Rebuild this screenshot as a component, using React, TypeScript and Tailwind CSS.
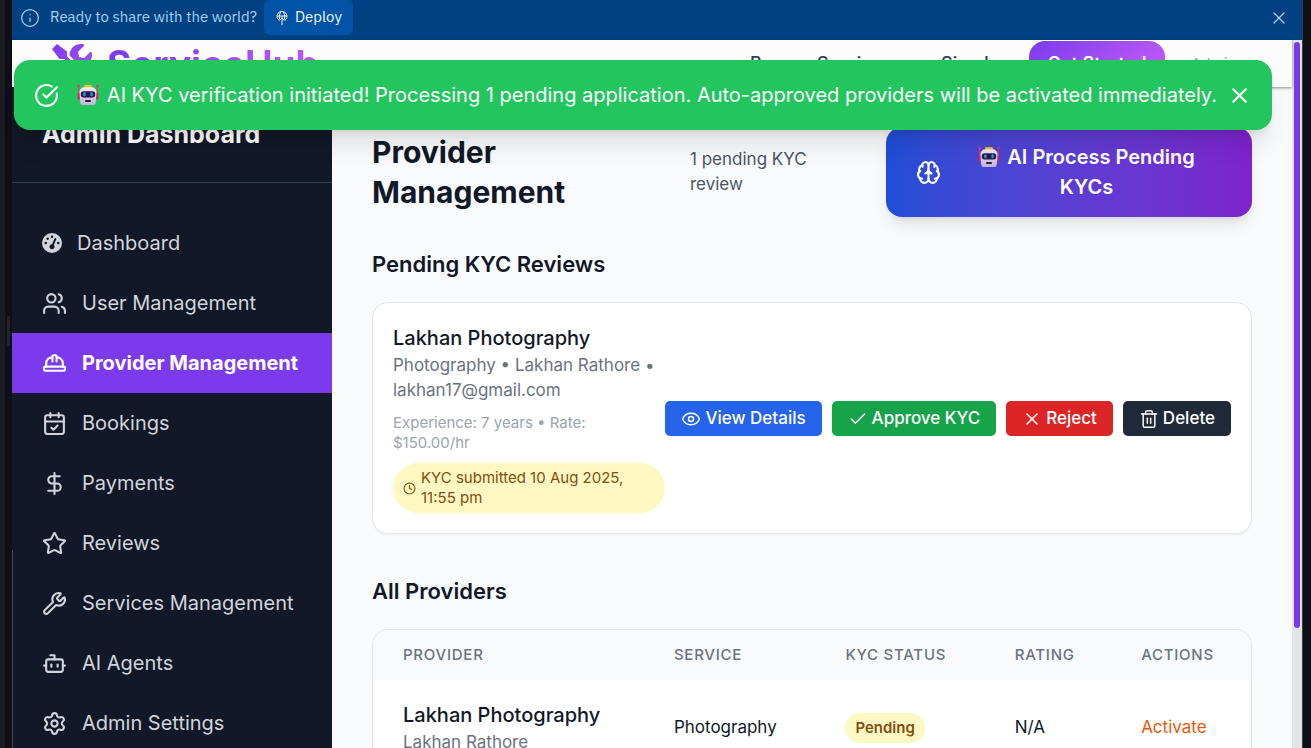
import React from "react";
import {
  Bot, Brain, CalendarCheck, Check, CircleCheckBig, Clock, DollarSign, Eye, HardHat,
  Info, Settings, Star, Trash2, Users, Wrench, X,
} from "lucide-react";
import { FaTools } from "react-icons/fa";
import { FaGaugeHigh } from "react-icons/fa6";

function Robot() {
  return (
    <svg viewBox="0 0 22 22" className="mr-0.5 inline-block size-[22px] shrink-0 align-[-4px]" role="img" aria-label="robot">
      <defs>
        <linearGradient id="robot-head" x1="0" x2="0" y1="0" y2="1">
          <stop stopColor="#f3ecf6" />
          <stop offset="1" stopColor="#c3b3dc" />
        </linearGradient>
      </defs>
      <circle cx="1.6" cy="2" r="1.2" fill="#f92f60" />
      <circle cx="20.4" cy="2" r="1.2" fill="#f92f60" />
      <rect x="1.1" y="2" width="1" height="10" fill="#f92f60" />
      <rect x="19.9" y="2" width="1" height="10" fill="#f92f60" />
      <rect x="0.8" y="9" width="3" height="6.500" rx="1" fill="#e0245e" />
      <rect x="18.200" y="9" width="3" height="6.500" rx="1" fill="#e0245e" />
      <rect x="7" y="1" width="8" height="4" rx="1.4" fill="#fcb621" />
      <path d="M7.500 3.200h7a5 5 0 0 1 5 5l-.7 10.300a2.600 2.600 0 0 1-2.600 2.500H5.800a2.600 2.600 0 0 1-2.600-2.500L2.500 8.200a5 5 0 0 1 5-5Z" fill="url(#robot-head)" />
      <rect x="3.800" y="7.200" width="14.400" height="6.200" rx="2.600" fill="#2b1a45" />
      <rect x="6.200" y="8.300" width="2.400" height="4" rx="1.200" fill="#1f9fe8" />
      <rect x="13.400" y="8.300" width="2.400" height="4" rx="1.200" fill="#1f9fe8" />
      <rect x="8.200" y="16" width="5.600" height="2" rx=".5" fill="#321b41" />
    </svg>
  );
}

const nav = [
  { label: "User Management", Icon: Users },
  { label: "Provider Management", Icon: HardHat, active: true },
  { label: "Bookings", Icon: CalendarCheck },
  { label: "Payments", Icon: DollarSign },
  { label: "Reviews", Icon: Star },
  { label: "Services Management", Icon: Wrench },
  { label: "AI Agents", Icon: Bot },
  { label: "Admin Settings", Icon: Settings },
];

const actions = [
  { label: "View Details", Icon: Eye, color: "bg-[#2563eb]" },
  { label: "Approve KYC", Icon: Check, color: "bg-[#16a34a]" },
  { label: "Reject", Icon: X, color: "bg-[#dc2626]" },
  { label: "Delete", Icon: Trash2, color: "bg-[#1f2937]" },
];

function DeployBanner() {
  return (
    <div className="flex h-10 shrink-0 items-start bg-[#004182] pr-[13px] pl-2 font-['IBM_Plex_Sans','Noto_Sans',sans-serif] text-[15px] text-[#a8d1fa]">
      <div className="flex h-[35px] items-center">
        <Info className="mr-2.5 size-5" strokeWidth={1.5} />
        <span>Ready to share with the world?</span>
        <button className="ml-[7px] flex h-[35px] items-center gap-1.5 rounded-md bg-[#0053a6] px-[11px] text-[#f5f9fc]">
          <svg viewBox="0 0 14 16" className="h-4 w-3.5" fill="none" stroke="currentColor" strokeWidth="1">
            <path d="M4.500 10.700A5 5 0 1 1 9.500 10.700M2 6h10M7 15V6M4.800 10.200 7 8l2.200 2.200M4.700 9.500C3.500 5.500 5 2 7 1.200 9 2 10.500 5.500 9.300 9.500" />
          </svg>
          Deploy
        </button>
      </div>
      <button aria-label="Dismiss" className="ml-auto flex h-[35px] items-center">
        <X className="size-5" strokeWidth={1.5} />
      </button>
    </div>
  );
}

function SiteHeader() {
  return (
    <header className="relative flex h-[47px] shrink-0 items-center justify-between bg-[#fcfcfc] px-10 shadow-[0_1px_3px_rgba(0,0,0,0.45)]">
      <a href="#" className="flex items-center gap-[15px] text-[37px] leading-[46px] font-bold">
        <svg width="0" height="0" className="absolute">
          <linearGradient id="brand" x1="0" x2="1" y1="0" y2="1">
            <stop stopColor="#7c3aed" />
            <stop offset="1" stopColor="#a855f7" />
          </linearGradient>
        </svg>
        <FaTools className="size-10" fill="url(#brand)" />
        <span className="bg-linear-to-r from-[#7c3aed] to-[#c056f5] bg-clip-text text-transparent">ServiceHub</span>
      </a>
      <nav className="flex shrink-0 items-center text-lg font-medium text-[#374151]">
        <a href="#" className="w-[67px]">Browse</a>
        <a href="#" className="w-[124px]">Services</a>
        <a href="#" className="w-[88px]">Sign In</a>
        <a href="#" className="flex h-[45px] w-[136px] items-center justify-center rounded-2xl bg-linear-135 from-[#7c3aed] to-[#c85cf8] font-semibold text-white">Get Started</a>
        <a href="#" className="w-[87px] pl-[26px] text-[15px] font-normal text-[#9ca3af]">Admin</a>
      </nav>
    </header>
  );
}

function Sidebar() {
  return (
    <aside className="relative w-80 shrink-0 bg-[#111827] text-[#d1d5db]">
      <h2 className="flex h-24 items-center border-b border-[#374151] px-[30px] text-[25px] font-bold text-white">Admin Dashboard</h2>
      <nav className="pt-[30px] text-xl">
        <a href="#" className="flex h-[60px] items-center gap-[15px] px-[30px]">
          <FaGaugeHigh className="size-5" />
          Dashboard
        </a>
        {nav.map(({ label, Icon, active }) => (
          <a
            key={label}
            href="#"
            aria-current={active ? "page" : undefined}
            className={active ? "flex h-[60px] items-center gap-[15px] bg-[#7c3aed] px-[30px] font-bold text-white" : "flex h-[60px] items-center gap-[15px] px-[30px]"}
          >
            <Icon className="size-[25px]" />
            {label}
          </a>
        ))}
      </nav>
      <div className="absolute bottom-0 left-0 h-[30%] w-px bg-[#41454f]" />
    </aside>
  );
}

function PendingCard() {
  return (
    <article className="flex items-center justify-between rounded-2xl border border-[#e5e7eb] bg-white p-5 shadow-xs">
      <div className="min-w-0">
        <h3 className="text-xl leading-[30px] font-medium">Lakhan Photography</h3>
        <p className="text-[17px] leading-[25px] text-[#6b7280]">Photography • Lakhan Rathore • lakhan17@gmail.com</p>
        <p className="mt-2.5 text-[15px] leading-5 text-[#9ca3af]">Experience: 7 years • Rate: $150.00/hr</p>
        <div className="mt-2.5 flex items-center gap-[5px] rounded-full bg-[#fef9c3] px-2.5 py-[5px] text-[15px] leading-5 text-[#854d0e]">
          <Clock className="size-[13px] shrink-0" />
          <span>KYC submitted 10 Aug 2025, 11:55 pm</span>
        </div>
      </div>
      <div className="flex shrink-0 gap-2.5">
        {actions.map(({ label, Icon, color }) => (
          <button key={label} className={`flex h-[35px] items-center gap-1 rounded-[5px] px-4 pt-0.5 text-[17px] font-medium ${color} text-white`}>
            <Icon className="size-5" strokeWidth={1.75} />
            {label}
          </button>
        ))}
      </div>
    </article>
  );
}

function ProvidersTable() {
  return (
    <div className="overflow-hidden rounded-2xl border border-[#e5e7eb] bg-white shadow-xs">
      <table className="w-full text-left">
        <thead className="bg-[#f9fafb] text-[15px] leading-5 tracking-wider text-[#6b7280] uppercase">
          <tr className="h-[50px]">
            {["Provider", "Service", "KYC Status", "Rating", "Actions"].map((h) => (
              <th key={h} scope="col" className="px-[30px] font-medium whitespace-nowrap">{h}</th>
            ))}
          </tr>
        </thead>
        <tbody className="text-[17px] leading-[25px]">
          <tr>
            <td className="px-[30px] py-5">
              <div className="text-xl leading-[30px] font-medium">Lakhan Photography</div>
              <div className="text-[#6b7280]">Lakhan Rathore</div>
            </td>
            <td className="px-[30px]">Photography</td>
            <td className="px-[30px]">
              <span className="inline-block rounded-full bg-[#fef9c3] px-2.5 py-[5px] text-[15px] leading-5 font-semibold text-[#854d0e]">Pending</span>
            </td>
            <td className="px-[30px]">N/A</td>
            <td className="px-[30px]"><button className="text-[#ea580c]">Activate</button></td>
          </tr>
        </tbody>
      </table>
    </div>
  );
}

export default function App() {
  return (
    <div className="flex h-screen overflow-hidden bg-[#0f0f17] font-[Inter,sans-serif]">
      <div className="flex w-3 shrink-0 items-center border-l-5 border-[#1a1c22] pb-[86px]">
        <div className="ml-0.5 h-[30px] w-[3px] bg-[#22242c]" />
      </div>
      <div className="flex min-w-0 flex-1 flex-col">
        <DeployBanner />
        <div className="relative flex min-h-0 flex-1">
          <div className="flex min-w-0 flex-1 flex-col">
            <SiteHeader />
            <div className="flex min-h-0 flex-1">
              <Sidebar />
              <main className="min-w-0 flex-1 overflow-hidden bg-[#f9fafb] p-10 text-[#111827]">
                <div className="mb-[30px] flex items-center">
                  <h1 className="mr-auto w-[198px] text-3xl leading-10 font-bold">Provider Management</h1>
                  <p className="mr-10 w-[156px] text-[17px] leading-[25px] text-[#4b5563]">1 pending KYC review</p>
                  <button className="flex w-[366px] items-center rounded-2xl bg-linear-to-r from-[#1d4ed8] to-[#7e22ce] px-[30px] py-[15px] text-xl leading-[30px] font-semibold text-white shadow-lg">
                    <Brain className="size-[25px] shrink-0" />
                    <span className="flex-1 pl-2.5 text-center"><Robot /> AI Process Pending KYCs</span>
                  </button>
                </div>
                <h2 className="mb-5 text-[22px] leading-[35px] font-semibold">Pending KYC Reviews</h2>
                <PendingCard />
                <h2 className="mt-10 mb-5 text-[22px] leading-[35px] font-semibold">All Providers</h2>
                <ProvidersTable />
              </main>
            </div>
          </div>
          <div className="w-2.5 shrink-0 bg-[#e2e3e7] px-0.5 pt-0.5">
            <div className="h-[83%] w-1.5 rounded-full bg-[#7c3aed]" />
          </div>
          <div role="status" className="absolute top-5 right-[30px] flex items-center rounded-2xl bg-[#22c55e] p-5 text-xl leading-[30px] whitespace-nowrap text-white shadow-xl">
            <CircleCheckBig className="mr-[18px] size-[25px]" />
            <span className="flex items-center gap-1.5"><Robot /> AI KYC verification initiated! Processing 1 pending application. Auto-approved providers will be activated immediately.</span>
            <button aria-label="Close notification" className="ml-2.5"><X className="size-[25px]" /></button>
          </div>
        </div>
      </div>
      <div className="w-[9px] shrink-0 border-l border-[#3c3d44]" />
    </div>
  );
}
